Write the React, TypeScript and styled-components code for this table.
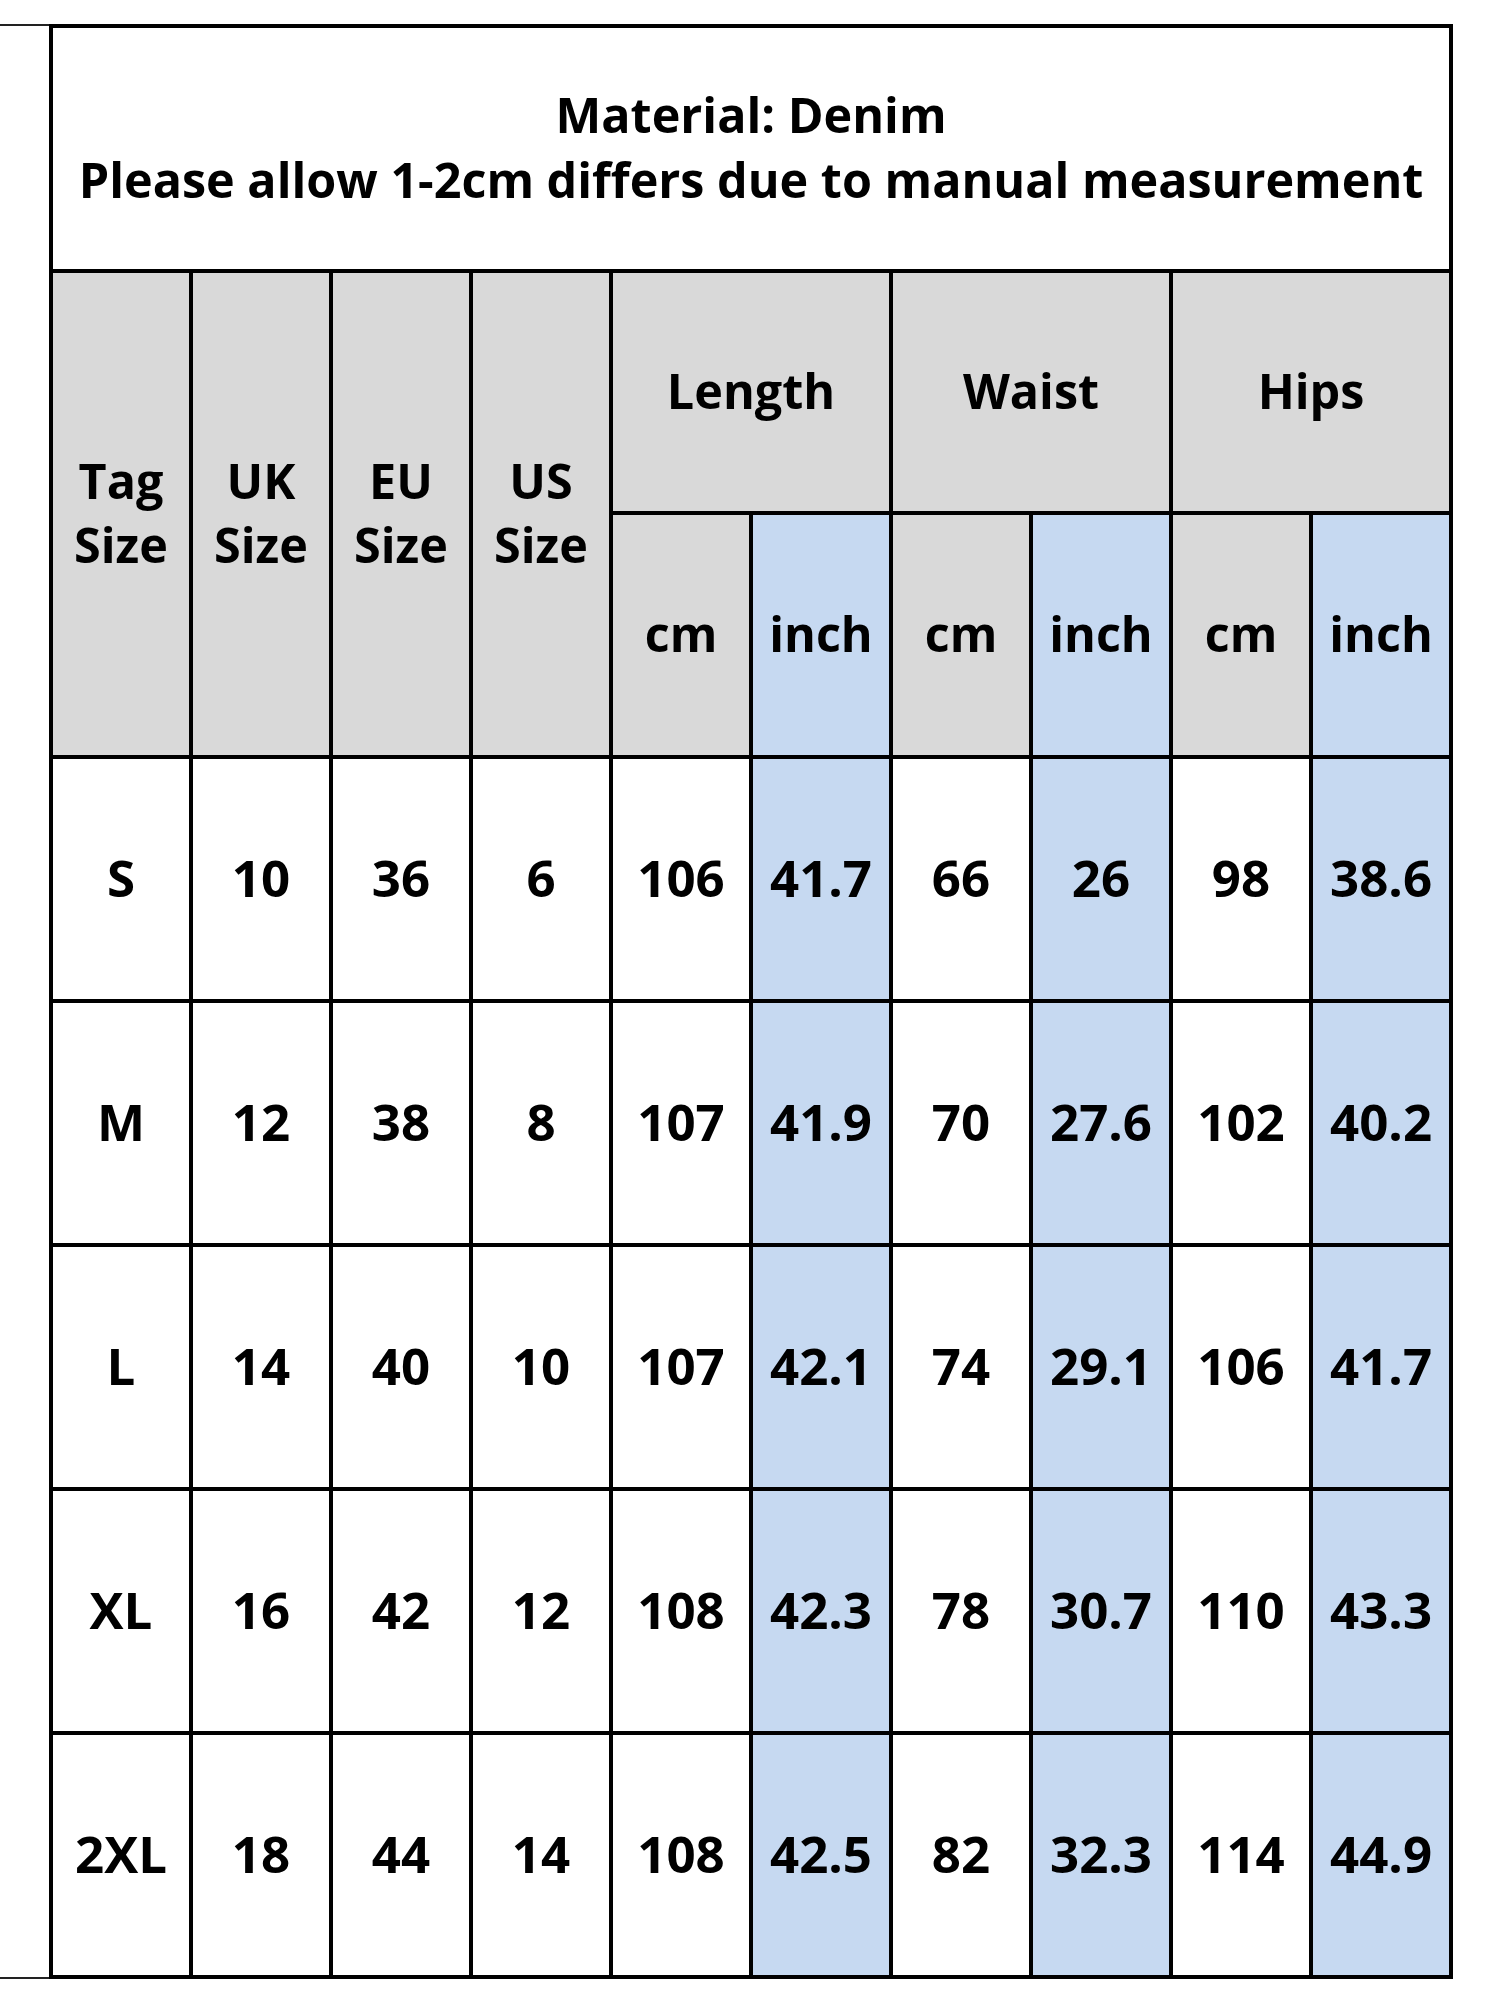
import React from 'react';
import styled, { createGlobalStyle } from 'styled-components';

type Tone = 'white' | 'grey' | 'blue';

interface SizeRow {
  tag: string;
  uk: string;
  eu: string;
  us: string;
  lengthCm: string;
  lengthIn: string;
  waistCm: string;
  waistIn: string;
  hipsCm: string;
  hipsIn: string;
}

const rows: SizeRow[] = [
  { tag: 'S', uk: '10', eu: '36', us: '6', lengthCm: '106', lengthIn: '41.7', waistCm: '66', waistIn: '26', hipsCm: '98', hipsIn: '38.6' },
  { tag: 'M', uk: '12', eu: '38', us: '8', lengthCm: '107', lengthIn: '41.9', waistCm: '70', waistIn: '27.6', hipsCm: '102', hipsIn: '40.2' },
  { tag: 'L', uk: '14', eu: '40', us: '10', lengthCm: '107', lengthIn: '42.1', waistCm: '74', waistIn: '29.1', hipsCm: '106', hipsIn: '41.7' },
  { tag: 'XL', uk: '16', eu: '42', us: '12', lengthCm: '108', lengthIn: '42.3', waistCm: '78', waistIn: '30.7', hipsCm: '110', hipsIn: '43.3' },
  { tag: '2XL', uk: '18', eu: '44', us: '14', lengthCm: '108', lengthIn: '42.5', waistCm: '82', waistIn: '32.3', hipsCm: '114', hipsIn: '44.9' },
];

const tones: Record<Tone, string> = {
  white: '#ffffff',
  grey: '#d9d9d9',
  blue: '#c6d9f1',
};

const GlobalStyle = createGlobalStyle`
  html, body {
    margin: 0;
    padding: 0;
    background: #ffffff;
  }
  body {
    font-family: "Open Sans", "Noto Sans", "Liberation Sans", sans-serif;
    color: #000000;
  }
`;

const Page = styled.div`
  display: flex;
  align-items: stretch;
  padding-top: 24px;
  width: 1500px;
`;

// thin edge of the neighbouring sheet on the left
const Stub = styled.div`
  width: 49px;
  flex: none;
  border-top: 2px solid #222;
  border-bottom: 2px solid #222;
`;

const Table = styled.table`
  border-collapse: collapse;
  table-layout: fixed;
  width: 1404px;
  font-weight: 700;
  font-size: 51px;
`;

const Cell = styled.td<{ $tone?: Tone; $h?: number; $head?: boolean }>`
  border: 4px solid #000;
  background: ${p => tones[p.$tone || 'white']};
  height: ${p => (p.$h || 240) - 4}px;
  padding: 0 0 4px;
  text-align: center;
  vertical-align: middle;
  line-height: 64px;
  font-size: ${p => (p.$head ? 48.5 : 51)}px;
  white-space: nowrap;
`;

const Title = styled(Cell)`
  line-height: 65px;
`;

const App: React.FC = () => {
  const cols = Array.from({ length: 10 });
  return (
    <>
      <GlobalStyle />
      <Page>
        <Stub />
        <Table>
          <colgroup>
            {cols.map((_, i) => (
              <col key={i} style={{ width: 140 }} />
            ))}
          </colgroup>
          <tbody>
            <tr>
              <Title colSpan={10} $h={241} $head>
                Material: Denim
                <br />
                Please allow 1-2cm differs due to manual measurement
              </Title>
            </tr>
            <tr>
              <Cell $head $tone="grey" rowSpan={2}>Tag<br />Size</Cell>
              <Cell $head $tone="grey" rowSpan={2}>UK<br />Size</Cell>
              <Cell $head $tone="grey" rowSpan={2}>EU<br />Size</Cell>
              <Cell $head $tone="grey" rowSpan={2}>US<br />Size</Cell>
              <Cell $head $tone="grey" colSpan={2} $h={238}>Length</Cell>
              <Cell $head $tone="grey" colSpan={2} $h={238}>Waist</Cell>
              <Cell $head $tone="grey" colSpan={2} $h={238}>Hips</Cell>
            </tr>
            <tr>
              <Cell $head $tone="grey">cm</Cell>
              <Cell $head $tone="blue">inch</Cell>
              <Cell $head $tone="grey">cm</Cell>
              <Cell $head $tone="blue">inch</Cell>
              <Cell $head $tone="grey">cm</Cell>
              <Cell $head $tone="blue">inch</Cell>
            </tr>
            {rows.map(r => (
              <tr key={r.tag}>
                <Cell>{r.tag}</Cell>
                <Cell>{r.uk}</Cell>
                <Cell>{r.eu}</Cell>
                <Cell>{r.us}</Cell>
                <Cell>{r.lengthCm}</Cell>
                <Cell $tone="blue">{r.lengthIn}</Cell>
                <Cell>{r.waistCm}</Cell>
                <Cell $tone="blue">{r.waistIn}</Cell>
                <Cell>{r.hipsCm}</Cell>
                <Cell $tone="blue">{r.hipsIn}</Cell>
              </tr>
            ))}
          </tbody>
        </Table>
      </Page>
    </>
  );
};

export default App;
